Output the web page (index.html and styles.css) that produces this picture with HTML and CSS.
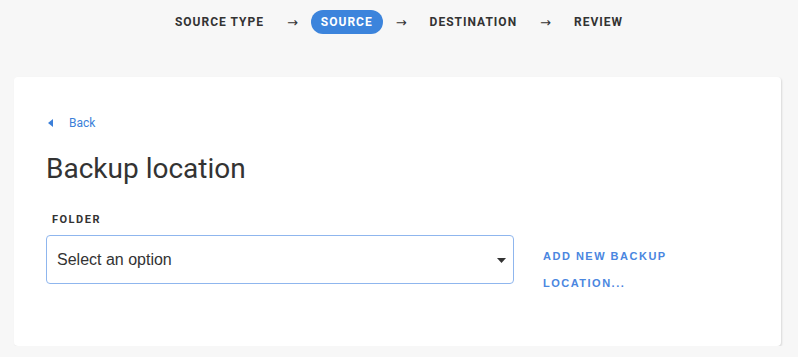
FILE: index.html
```html
<!DOCTYPE html>
<html>
<head>
  <meta charset="utf-8">
  <link rel="stylesheet" href="styles.css">
</head>
<body>
  <div class="steps">
    <span class="step">Source type</span>
    <span class="arrow">&rarr;</span>
    <span class="step step-active">Source</span>
    <span class="arrow">&rarr;</span>
    <span class="step">Destination</span>
    <span class="arrow">&rarr;</span>
    <span class="step">Review</span>
  </div>

  <div class="card">
    <a class="back" href="#">
      <svg class="back-icon" width="6" height="8" viewBox="0 0 6 8"><path d="M5 0 L0 4 L5 8 Z" fill="currentColor"/></svg>
      Back
    </a>

    <h1 class="title">Backup location</h1>

    <div class="field-label">Folder</div>
    <div class="field-row">
      <div class="select">
        <span>Select an option</span>
        <svg class="caret" width="9" height="5" viewBox="0 0 9 5"><path d="M0 0 H9 L4.5 5 Z" fill="#333"/></svg>
      </div>
      <a class="add-link" href="#">Add new backup location...</a>
    </div>
  </div>
</body>
</html>
```

FILE: styles.css
```css
body {
  margin: 0;
  background: #f7f7f7;
  font-family: Roboto, 'Liberation Sans', Arial, sans-serif;
  color: #333;
}

.steps {
  display: flex;
  justify-content: center;
  align-items: center;
  gap: 13px;
  height: 44px;
  margin-bottom: 33px;
}

.step {
  font-size: 12px;
  font-weight: bold;
  text-transform: uppercase;
  letter-spacing: 1px;
  padding: 5px 10px;
  border-radius: 12px;
  color: #333;
}

.step-active {
  background: #3c84dc;
  color: white;
}

.arrow {
  font-family: 'DejaVu Sans', sans-serif;
  font-size: 13px;
  color: #333;
}

.card {
  margin: 0 17px 0 14px;
  background: white;
  border-radius: 4px;
  box-shadow: 1px 1px 2px rgba(0, 0, 0, 0.12);
  padding: 35px 32px 49px;
}

.back {
  display: inline-flex;
  align-items: center;
  gap: 15px;
  margin-left: 2px;
  color: #3b7fd9;
  text-decoration: none;
  font-size: 12px;
}

.title {
  font-size: 28px;
  font-weight: normal;
  margin: 21px 0 28px;
  color: #333;
}

.field-label {
  font-size: 11px;
  font-weight: bold;
  letter-spacing: 1.5px;
  text-transform: uppercase;
  margin-left: 6px;
  margin-bottom: 9px;
}

.field-row {
  display: flex;
  align-items: flex-start;
  gap: 29px;
}

.select {
  width: 468px;
  height: 49px;
  box-sizing: border-box;
  border: 1px solid #8fb6ee;
  border-radius: 4px;
  display: flex;
  align-items: center;
  justify-content: space-between;
  padding: 0 7px 0 10px;
  font-family: 'Liberation Sans', Arial, sans-serif;
  font-size: 16px;
  color: #333;
}

.caret {
  margin-top: 2px;
}

.add-link {
  width: 130px;
  margin-top: 8px;
  font-family: 'Liberation Sans', Arial, sans-serif;
  font-size: 11px;
  font-weight: bold;
  letter-spacing: 1.5px;
  line-height: 27px;
  text-transform: uppercase;
  color: #4a86e0;
  text-decoration: none;
}
```
